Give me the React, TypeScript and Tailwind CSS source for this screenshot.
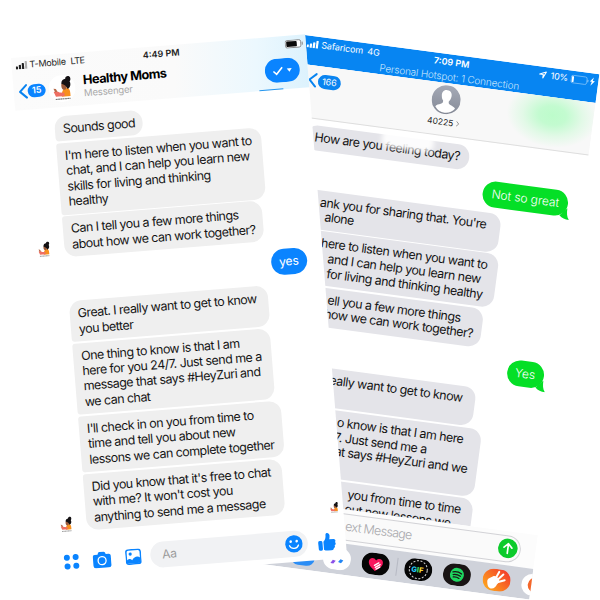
import React from "react";

function SignalBars({ className, last }: { className: string; last: number }) {
  return (
    <svg viewBox="0 0 12 8" className={className} fill="currentColor">
      <rect x="0" y="5" width="2.2" height="3" rx="0.5" />
      <rect x="3.1" y="3.6" width="2.2" height="4.4" rx="0.5" />
      <rect x="6.2" y="2" width="2.2" height="6" rx="0.5" />
      <rect x="9.3" y="0.2" width="2.2" height="7.8" rx="0.5" opacity={last} />
    </svg>
  );
}

function MomAvatar({ className }: { className: string }) {
  return (
    <svg viewBox="0 0 28 28" className={className}>
      <circle cx="14" cy="14" r="14" fill="#fff" />
      <path d="M13 22.500c0-5 2-8.500 5-9 4-.3 4.300 4 4.100 9z" fill="#f7901e" />
      <path d="M13.500 9.500c1-2 5-2 5.500 1 0 2.500-.5 5-2.500 5-2.300.2-3.500-2.500-3-6z" fill="#9a5b3c" />
      <path d="M13.500 9c.3-3.300 2.500-4.800 4.500-4.800C18 1 22.800.8 23.300 3.700c.3 1.500-.3 2.600-1 3.300 1.500 3 .3 7.200-2.800 7.700-1-2.500-2.500-5-6-5.700z" fill="#141214" />
      <path d="M5 17c2-1 4.500 0 6 .8l5 .7v3.500H7z" fill="#ef6f63" />
      <path d="M5 13.500l2.500.5 1.500 3-2.500.2z" fill="#b76b4a" />
      <path d="M6.500 24.800h15.500" stroke="#777" strokeWidth="1.200" strokeDasharray="2 .4" />
    </svg>
  );
}

function Chevron({ className }: { className: string }) {
  return (
    <svg viewBox="0 0 9 15" className={className} fill="none" stroke="#0a84f0" strokeWidth="2" strokeLinecap="round" strokeLinejoin="round">
      <path d="M7.8 1.2L1.3 7.5l6.5 6.3" />
    </svg>
  );
}

function Incoming({ lines, className }: { lines: string[]; className: string }) {
  return (
    <div className={`shrink-0 bg-[#efefef] py-[5px] pl-2 text-[12.5px] leading-[15.45px] tracking-[-0.54px] whitespace-nowrap text-[#151515] ${className}`}>
      {lines.map((l) => (
        <div key={l}>{l}</div>
      ))}
    </div>
  );
}

type SmsLine = { text: string; indent: number };

function SmsIncoming({ lines, className }: { lines: SmsLine[]; className: string }) {
  return (
    <div className={`ml-[14px] shrink-0 rounded-[12px] bg-[#e4e4e9] py-[5px] pl-[9px] text-[12.5px] leading-[14.65px] tracking-[-0.54px] whitespace-nowrap text-[#151515] ${className}`}>
      {lines.map((l, i) => (
        <div key={i} className="h-[14.65px]" style={{ paddingLeft: l.indent }}>
          {l.text}
        </div>
      ))}
    </div>
  );
}

function SmsOutgoing({ text, className }: { text: string; className: string }) {
  return (
    <div className={`relative flex h-[26px] items-center justify-center rounded-[13px] bg-[#05df26] text-[12px] font-light tracking-[-0.05px] text-white ${className}`}>
      {text}
      <svg viewBox="0 0 12 12" className="absolute -right-[3px] -bottom-[3px] size-3" fill="#05df26">
        <path d="M9 0c0 5 .5 8.500 3 11.500C8 11.500 5 10.500 2 8z" />
      </svg>
    </div>
  );
}

function SmsPhone() {
  return (
    <div className="absolute top-[34.700px] left-[304.600px] flex h-[530px] w-[297px] origin-top-left rotate-[7.6deg] flex-col overflow-hidden bg-white">
      <div className="h-[29px] shrink-0 bg-[#0785f2] text-white">
        <div className="flex h-[16px] items-center pl-[3px] text-[9px]">
          <SignalBars last={1} className="h-[8px] w-[12px]" />
          <span className="ml-[2.500px] w-[42.500px] tracking-[-0.1px]">Safaricom</span>
          <span className="ml-[4px] w-[14px]">4G</span>
          <span className="ml-[52px] w-[38px] text-center font-semibold whitespace-nowrap">7:09 PM</span>
          <svg viewBox="0 0 10 10" className="ml-[69px] size-[8px]" fill="none" stroke="#fff" strokeWidth="1.400">
            <path d="M9 1L5.500 9V4.500H1z" strokeLinejoin="round" />
          </svg>
          <span className="ml-[4px] w-[18px] tracking-[-0.3px]">10%</span>
          <svg viewBox="0 0 26 10" className="ml-[2px] h-[10px] w-[26px]">
            <rect x="0.500" y="1.500" width="16" height="7.500" rx="1.800" fill="none" stroke="#8ec9fa" strokeWidth=".7" />
            <rect x="1.300" y="2.300" width="2" height="6" rx=".7" fill="#fff" />
            <path d="M17.500 4v2.500" stroke="#8ec9fa" />
            <path d="M23 1l-3.500 4.500h2L20.500 9.500l4-5h-2.200z" fill="#fff" />
          </svg>
        </div>
        <div className="text-center text-[10px] leading-[13px] font-light tracking-[-0.150px] whitespace-nowrap text-[#c4e3fc]">
          Personal Hotspot: 1 Connection
        </div>
      </div>
      <div className="flex h-[53px] shrink-0 border-b border-[#dedede] bg-[#f8f8f8] bg-[radial-gradient(ellipse_46px_32px_at_256px_18px,#bdfccb_0%,#c3fbd0_30%,#e2f9e7_65%,#f8f8f8_100%)]">
        <div className="flex h-[29px] w-[110px] items-center pl-[9px]">
          <Chevron className="h-[15px] w-[9px]" />
          <span className="ml-[1px] flex h-[14px] w-[23px] items-center justify-center rounded-full bg-[#0a84f0] text-[9px] text-white">166</span>
        </div>
        <div className="flex w-[77px] flex-col items-center pt-[2px]">
          <svg viewBox="0 0 30 30" className="size-[29px]">
            <defs>
              <linearGradient id="person" x1="0" y1="0" x2="0" y2="1">
                <stop offset="0" stopColor="#a5aab7" />
                <stop offset="1" stopColor="#858a96" />
              </linearGradient>
            </defs>
            <circle cx="15" cy="15" r="15" fill="url(#person)" />
            <path d="M15 5c-4 0-5.500 3-5 6.500.2 2 .9 3.500 2 4.800.3 2-.3 2.900-2 3.600-2.200.9-4.200 1.500-5.300 3.200A13 13 0 0 0 15 28.500 13 13 0 0 0 25.300 23.100c-1.100-1.700-3.100-2.300-5.300-3.200-1.700-.7-2.300-1.600-2-3.600 1.100-1.300 1.800-2.800 2-4.800C20.500 8 19 5 15 5z" fill="#fff" />
          </svg>
          <div className="mt-[3px] flex items-center text-[8.500px] leading-[10px] text-[#222]">
            40225
            <svg viewBox="0 0 5 7" className="ml-[2px] h-[6px] w-[4px]" fill="none" stroke="#888">
              <path d="M1 .5l3 3-3 3" />
            </svg>
          </div>
        </div>
      </div>
      <div className="flex h-[383px] shrink-0 flex-col overflow-hidden pt-[6px]">
        <div className="relative">
          <SmsIncoming className="w-[165px]" lines={[{ text: "How are you feeling today?", indent: 0 }]} />
          <div className="absolute -top-[6px] left-[90px] h-[18px] w-[52px] rounded-[6px] bg-white/90 blur-[2.5px]" />
        </div>
        <SmsOutgoing className="mt-[7.500px] ml-[197px] w-[86px] shrink-0" text="Not so great" />
        <SmsIncoming
          className="mt-[5.500px] w-[205px]"
          lines={[
            { text: "ank you for sharing that. You're", indent: 14 },
            { text: "alone", indent: 20.5 },
          ]}
        />
        <SmsIncoming
          className="mt-[1.500px] w-[208px]"
          lines={[
            { text: "here to listen when you want to", indent: 20.5 },
            { text: "and I can help you learn new", indent: 29 },
            { text: "for living and thinking healthy", indent: 30 },
          ]}
        />
        <SmsIncoming
          className="mt-[1.500px] w-[200px]"
          lines={[
            { text: "ell you a few more things", indent: 34.5 },
            { text: "how we can work together?", indent: 33 },
          ]}
        />
        <SmsOutgoing className="mt-[7px] ml-[244.500px] w-[37px] shrink-0" text="Yes" />
        <SmsIncoming
          className="mt-[7px] w-[203px]"
          lines={[
            { text: "eally want to get to know", indent: 47 },
            { text: "", indent: 0 },
          ]}
        />
        <SmsIncoming
          className="mt-[1.500px] w-[214px]"
          lines={[
            { text: "o know is that I am here", indent: 60 },
            { text: "7. Just send me a", indent: 59 },
            { text: "at says #HeyZuri and we", indent: 61.5 },
            { text: "", indent: 0 },
          ]}
        />
        <SmsIncoming
          className="mt-[1.500px] w-[215px]"
          lines={[
            { text: "you from time to time", indent: 80 },
            { text: "out new lessons we", indent: 79 },
            { text: "", indent: 0 },
          ]}
        />
      </div>
      <div className="flex h-[34px] shrink-0 items-center bg-[#fcfcfc] pl-[88px]">
        <div className="flex h-[27px] w-[194px] items-center justify-between rounded-full border border-[#d2d2d6] bg-[#fafafa] pr-[2.500px] pl-[16px] text-[12.500px] font-light tracking-[-0.65px] text-[#a9a9ad]">
          ext Message
          <svg viewBox="0 0 20 20" className="size-[20px]">
            <circle cx="10" cy="10" r="9.800" fill="#0ccb2c" />
            <path d="M10 15V5.500M6 9.300l4-4 4 4" fill="none" stroke="#fff" strokeWidth="1.700" strokeLinecap="round" strokeLinejoin="round" />
          </svg>
        </div>
      </div>
      <div className="flex h-[31px] shrink-0 items-center bg-[#cfd2da] pl-[55px]">
        <span className="mt-[7px] h-[16px] w-[24px] shrink-0 rounded-full bg-[#2b8df5]" />
        <svg viewBox="0 0 28 22" className="ml-[8px] h-[22px] w-[28px] shrink-0">
          <rect width="28" height="22" rx="11" fill="#fff" />
          <path d="M8 16l2-3.500 3 .5-2 3z" fill="#8b50e8" />
          <path d="M15.500 14l2-3 3 .8-2 3z" fill="#2386f4" />
        </svg>
        <svg viewBox="0 0 28 22" className="ml-[11px] h-[22px] w-[28px] shrink-0">
          <rect width="28" height="22" rx="11" fill="#050505" />
          <path d="M14 18C9 14.500 6.500 12 7 8.500 7.500 5 12 4.500 14 7.500c2-3 6.500-2.500 7 1C21.500 12 19 14.500 14 18z" fill="#f7175d" />
          <path d="M13 12.500l4-3M14 14.300l4.500-3.300M15 16l3.500-2.500" stroke="#fff" strokeWidth="1.400" strokeLinecap="round" />
        </svg>
        <span className="ml-[7px] h-[18px] w-px shrink-0 bg-[#b6b9c3]" />
        <svg viewBox="0 0 28 22" className="ml-[7px] h-[22px] w-[28px] shrink-0">
          <rect width="28" height="22" rx="11" fill="#050505" />
          <circle cx="14" cy="11" r="9" fill="none" stroke="#ddd" strokeWidth="1" strokeDasharray="2 1.600" />
          <text x="7" y="13.800" fontFamily="Inter, sans-serif" fontWeight="800" fontSize="7.500">
            <tspan fill="#22c9f5">G</tspan>
            <tspan fill="#35dc70">I</tspan>
            <tspan fill="#f6dc36">F</tspan>
          </text>
        </svg>
        <svg viewBox="0 0 28 22" className="ml-[11px] h-[22px] w-[28px] shrink-0">
          <rect width="28" height="22" rx="11" fill="#191414" />
          <circle cx="14" cy="11" r="7" fill="#1ed760" />
          <path d="M9.700 8.600c3-.9 6.200-.6 8.800.9M10.200 11.200c2.600-.7 5.100-.4 7.300.8M10.600 13.600c2-.5 4-.3 5.900.7" stroke="#191414" strokeWidth="1.300" strokeLinecap="round" fill="none" />
        </svg>
        <svg viewBox="0 0 28 22" className="ml-[12px] h-[22px] w-[28px] shrink-0">
          <defs>
            <linearGradient id="band" x1="1" y1="0" x2="0" y2="1">
              <stop offset="0" stopColor="#f22f2f" />
              <stop offset="1" stopColor="#ffb31a" />
            </linearGradient>
          </defs>
          <rect width="28" height="22" rx="11" fill="url(#band)" />
          <path d="M5 14c-1-4 3-4.500 5-6.500 2-1 4.500 0 5.500 2 2 2 1.500 4-.5 5.500-1 3-2.500 5-5.500 5-3-.5-4-3-4.500-6z" fill="#fff" />
          <path d="M13 9l2.500-6.500M15 10.500l5-6M15 13l7-3" stroke="#fff" strokeWidth="2" strokeLinecap="round" />
        </svg>
        <svg viewBox="0 0 28 22" className="ml-[11px] h-[22px] w-[28px] shrink-0">
          <rect width="28" height="22" rx="11" fill="#fff" />
          <circle cx="14" cy="11" r="7.500" fill="#f4672a" />
        </svg>
      </div>
    </div>
  );
}

function MessengerPhone() {
  return (
    <div className="absolute top-[58px] left-[11px] flex h-[525px] w-[295px] origin-top-left rotate-[-4.6deg] flex-col bg-white">
      <div className="h-[53px] shrink-0 bg-[linear-gradient(95deg,#fbfbfb_0%,#fafafa_55%,#ecf8fe_82%,#dcf2fd_100%)]">
        <div className="flex h-[16px] items-center pl-[4px] text-[9px] text-[#222]">
          <SignalBars last={0.35} className="h-[8px] w-[12px]" />
          <span className="ml-[2px] w-[37px] tracking-[-0.2px] whitespace-nowrap">T-Mobile</span>
          <span className="ml-[4px] w-[16px] tracking-[-0.5px]">LTE</span>
          <span className="ml-[56px] w-[38px] text-center font-semibold whitespace-nowrap">4:49 PM</span>
          <svg viewBox="0 0 19 9" className="ml-[105px] h-[9px] w-[19px]">
            <rect x=".5" y=".8" width="15.500" height="7.400" rx="1.800" fill="#fff" stroke="#777" strokeWidth=".8" />
            <rect x="1.500" y="1.800" width="10.500" height="5.400" rx=".8" fill="#0a0a0a" />
            <path d="M17.500 3v3" stroke="#888" />
          </svg>
        </div>
        <div className="flex h-[36px] items-center pl-[5px]">
          <Chevron className="h-[15px] w-[9px]" />
          <span className="flex h-[13px] w-[18px] items-center justify-center rounded-full bg-[#0a84ff] text-[9px] font-semibold text-white">15</span>
          <MomAvatar className="ml-[3px] size-[27px]" />
          <div className="ml-[8px] w-[90px] whitespace-nowrap">
            <div className="text-[12.800px] leading-[14px] font-bold tracking-[-0.550px] text-black">Healthy Moms</div>
            <div className="text-[9.500px] leading-[12px] tracking-[-0.150px] text-[#a9a9a9]">Messenger</div>
          </div>
          <svg viewBox="0 0 35 24" className="ml-[92px] h-[24px] w-[35px]">
            <rect width="35" height="24" rx="12" fill="#0a84ff" />
            <path d="M8.500 12.500l3 3 6-6.500" fill="none" stroke="#fff" strokeWidth="1.600" />
            <path d="M22 10.500h5l-2.500 3.500z" fill="#fff" />
          </svg>
        </div>
        <div className="-mt-[0.500px] ml-[245px] h-[1.500px] w-[24px] bg-[#2495ee]" />
      </div>
      <div className="flex h-[436px] shrink-0 pt-[9px]">
        <div className="flex w-[38px] shrink-0 flex-col items-end pr-[12.500px]">
          <MomAvatar className="mt-[123px] size-[17px]" />
          <MomAvatar className="mt-[259px] size-[17px]" />
        </div>
        <div className="flex w-[241px] shrink-0 flex-col gap-[1.500px]">
          <Incoming className="w-[88px] rounded-[12px] rounded-bl-[4px]" lines={["Sounds good"]} />
          <Incoming className="w-[205px] rounded-[12px] rounded-l-[3px]" lines={["I'm here to listen when you want to", "chat, and I can help you learn new", "skills for living and thinking", "healthy"]} />
          <Incoming className="w-[200px] rounded-[12px] rounded-tl-[3px]" lines={["Can I tell you a few more things", "about how we can work together?"]} />
          <div className="my-[7.500px] ml-auto flex h-[26px] w-[36.500px] shrink-0 items-center justify-center rounded-full bg-[#0a84ff] text-[12px] text-white">yes</div>
          <Incoming className="w-[199px] rounded-[12px] rounded-bl-[3px]" lines={["Great. I really want to get to know", "you better"]} />
          <Incoming className="w-[198px] rounded-[12px] rounded-l-[3px]" lines={["One thing to know is that I am", "here for you 24/7. Just send me a", "message that says #HeyZuri and", "we can chat"]} />
          <Incoming className="w-[203px] rounded-[12px] rounded-l-[3px]" lines={["I'll check in on you from time to", "time and tell you about new", "lessons we can complete together"]} />
          <Incoming className="w-[199px] rounded-[12px] rounded-tl-[3px]" lines={["Did you know that it's free to chat", "with me? It won't cost you", "anything to send me a message"]} />
        </div>
        <MomAvatar className="mt-[406px] ml-[1px] size-[12px] shrink-0" />
      </div>
      <div className="flex h-[36px] shrink-0 items-center pl-[12px]">
        <svg viewBox="0 0 16 16" className="size-[16px]" fill="#0a84ff">
          <circle cx="3.600" cy="3.600" r="3" />
          <circle cx="12.400" cy="3.600" r="3" />
          <circle cx="3.600" cy="12.400" r="3" />
          <circle cx="12.400" cy="12.400" r="3" />
        </svg>
        <svg viewBox="0 0 19 17" className="ml-[13px] h-[17px] w-[19px]">
          <path d="M6 1.500Q6.500.5 7.500.5h4q1 0 1.500 1l.6 1.500H16.500q2 0 2 2V14q0 2.500-2.500 2.500H3Q.5 16.500.5 14V5q0-2 2-2h2.900z" fill="#0a84ff" />
          <circle cx="9.500" cy="9.300" r="4" fill="none" stroke="#fff" strokeWidth="1.300" />
        </svg>
        <svg viewBox="0 0 16 16" className="ml-[14px] size-[16px]">
          <rect x=".8" y=".8" width="14.400" height="14.400" rx="2.500" fill="#fff" stroke="#0a84ff" strokeWidth="1.500" />
          <circle cx="5" cy="5" r="1.600" fill="#0a84ff" />
          <path d="M1 11.500c2-2 4-2 5.500-.2C9 8 12 7 15 9.500v5H1z" fill="#0a84ff" />
        </svg>
        <div className="ml-[9px] flex h-[26px] w-[158px] items-center justify-between rounded-full bg-[#f1f2f4] pr-[5px] pl-[12px] text-[12px] tracking-[-0.4px] text-[#9b9b9b]">
          Aa
          <svg viewBox="0 0 18 18" className="size-[18px]">
            <circle cx="9" cy="9" r="8.700" fill="#0a84ff" />
            <circle cx="6" cy="6.500" r="1.300" fill="#fff" />
            <circle cx="12" cy="6.500" r="1.300" fill="#fff" />
            <path d="M4.500 10.500c1.500 4 7.500 4 9 0" fill="none" stroke="#fff" strokeWidth="1.300" strokeLinecap="round" />
          </svg>
        </div>
        <svg viewBox="0 0 18 19" className="ml-[10px] h-[19px] w-[18px]" fill="#0a84ff">
          <rect x=".3" y="8.200" width="4.300" height="9.800" rx="1.600" />
          <path d="M5.600 9.200C8 7.500 8.200 4.500 8.200 2.500c0-2.700 4-2.300 4 1 0 1.500-.3 2.700-.6 3.700h4.200c2.300 0 2.600 2.500 1.200 3.300 1.300 1 .8 2.900-.5 3.200.7 1.200 0 2.500-1 2.700.1 1.300-.8 2-2.200 2H9.500c-1.700 0-2.900-.5-3.900-1.200z" />
        </svg>
      </div>
    </div>
  );
}

export default function App() {
  return (
    <div className="relative h-[600px] w-[600px] overflow-hidden bg-white font-['Inter',sans-serif]">
      <SmsPhone />
      <MessengerPhone />
    </div>
  );
}
